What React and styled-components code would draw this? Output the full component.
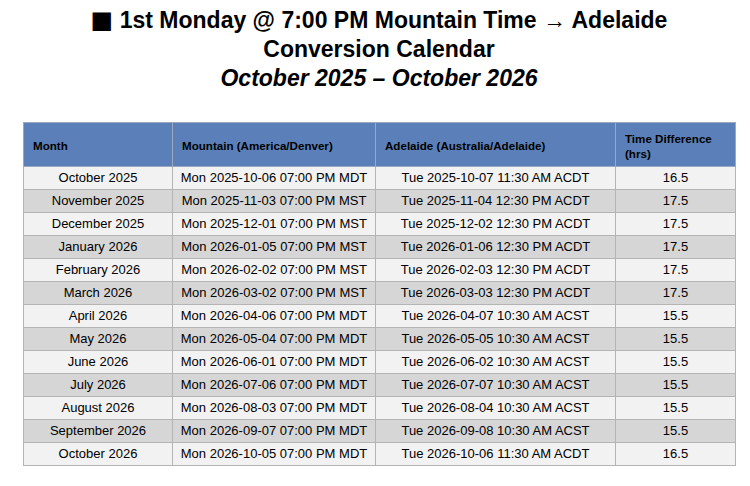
import styled, { createGlobalStyle } from 'styled-components';

const GlobalStyle = createGlobalStyle`
  body {
    margin: 0;
    background: #ffffff;
    font-family: 'Liberation Sans', Arial, sans-serif;
    color: #000;
  }
`;

const Page = styled.div`
  width: 750px;
  padding: 6px 15px 0 23px;
  box-sizing: border-box;
`;

const Title = styled.h1`
  margin: 0;
  text-align: center;
  font-size: 23px;
  line-height: 29px;
  font-weight: bold;
`;

const Square = styled.span`
  font-family: 'DejaVu Sans', sans-serif;
  font-size: 24px;
`;

const Range = styled.span`
  display: block;
  font-style: italic;
`;

const Table = styled.table`
  margin-top: 29px;
  width: 712px;
  border-collapse: collapse;
  border: 1px solid #b4b4b4;
  table-layout: fixed;
  font-size: 13px;
`;

const HeadCell = styled.th`
  box-sizing: border-box;
  background: #5b80b9;
  color: #000;
  font-size: 11.6px;
  font-weight: bold;
  text-align: left;
  padding: 2px 9px 0;
  height: 44px;
  line-height: 15px;
  border: 1px solid #9aa9c0;
  width: ${(p) => p.$w}px;
`;

const Row = styled.tr`
  background: ${(p) => (p.$shade ? '#d6d6d6' : '#f2f2f2')};
`;

const Cell = styled.td`
  text-align: center;
  height: 22px;
  padding: 0;
  line-height: 16px;
  border: 1px solid #b4b4b4;
`;

const rows = [
  ['October 2025', 'Mon 2025-10-06 07:00 PM MDT', 'Tue 2025-10-07 11:30 AM ACDT', '16.5'],
  ['November 2025', 'Mon 2025-11-03 07:00 PM MST', 'Tue 2025-11-04 12:30 PM ACDT', '17.5'],
  ['December 2025', 'Mon 2025-12-01 07:00 PM MST', 'Tue 2025-12-02 12:30 PM ACDT', '17.5'],
  ['January 2026', 'Mon 2026-01-05 07:00 PM MST', 'Tue 2026-01-06 12:30 PM ACDT', '17.5'],
  ['February 2026', 'Mon 2026-02-02 07:00 PM MST', 'Tue 2026-02-03 12:30 PM ACDT', '17.5'],
  ['March 2026', 'Mon 2026-03-02 07:00 PM MST', 'Tue 2026-03-03 12:30 PM ACDT', '17.5'],
  ['April 2026', 'Mon 2026-04-06 07:00 PM MDT', 'Tue 2026-04-07 10:30 AM ACST', '15.5'],
  ['May 2026', 'Mon 2026-05-04 07:00 PM MDT', 'Tue 2026-05-05 10:30 AM ACST', '15.5'],
  ['June 2026', 'Mon 2026-06-01 07:00 PM MDT', 'Tue 2026-06-02 10:30 AM ACST', '15.5'],
  ['July 2026', 'Mon 2026-07-06 07:00 PM MDT', 'Tue 2026-07-07 10:30 AM ACST', '15.5'],
  ['August 2026', 'Mon 2026-08-03 07:00 PM MDT', 'Tue 2026-08-04 10:30 AM ACST', '15.5'],
  ['September 2026', 'Mon 2026-09-07 07:00 PM MDT', 'Tue 2026-09-08 10:30 AM ACST', '15.5'],
  ['October 2026', 'Mon 2026-10-05 07:00 PM MDT', 'Tue 2026-10-06 11:30 AM ACDT', '16.5'],
];

export default function App() {
  return (
    <Page>
      <GlobalStyle />
      <Title>
        <Square>■</Square> 1st Monday @ 7:00 PM Mountain Time → Adelaide
        <br />
        Conversion Calendar
        <Range>October 2025 – October 2026</Range>
      </Title>
      <Table>
        <thead>
          <tr>
            <HeadCell $w={149}>Month</HeadCell>
            <HeadCell $w={203}>Mountain (America/Denver)</HeadCell>
            <HeadCell $w={240}>Adelaide (Australia/Adelaide)</HeadCell>
            <HeadCell $w={120}>Time Difference (hrs)</HeadCell>
          </tr>
        </thead>
        <tbody>
          {rows.map((r, i) => (
            <Row key={r[0]} $shade={i % 2 === 1}>
              {r.map((c, j) => (
                <Cell key={j}>{c}</Cell>
              ))}
            </Row>
          ))}
        </tbody>
      </Table>
    </Page>
  );
}
